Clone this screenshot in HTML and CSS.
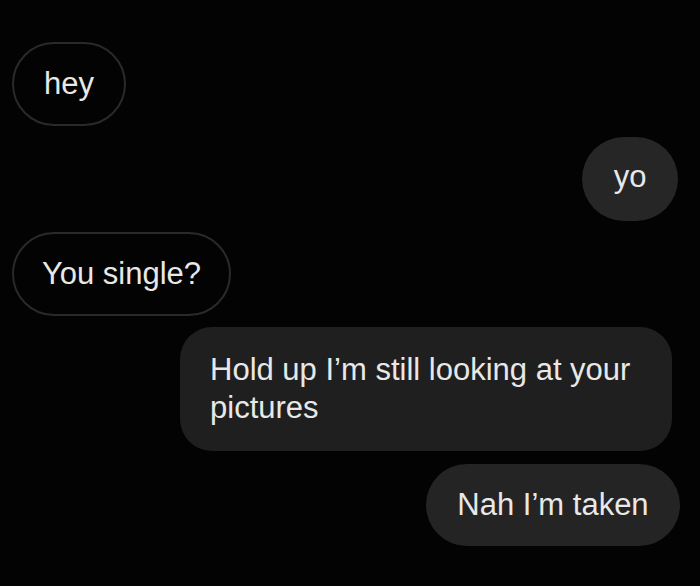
FILE: index.html
```html
<!DOCTYPE html>
<html>
<head>
<meta charset="utf-8">
<link rel="stylesheet" href="styles.css">
</head>
<body>
<div class="chat">
  <div class="bubble in hey">hey</div>
  <div class="bubble out yo">yo</div>
  <div class="bubble in single">You single?</div>
  <div class="bubble out long">Hold up I’m still looking at your pictures</div>
  <div class="bubble out nah">Nah I’m taken</div>
</div>
</body>
</html>
```
FILE: styles.css
```css
html, body {
  margin: 0;
  padding: 0;
  background: #030303;
  width: 700px;
  height: 586px;
  overflow: hidden;
}
.chat {
  display: flex;
  flex-direction: column;
  gap: 11px;
  padding: 42px 20px 0 12px;
  font-family: "Liberation Sans", Arial, sans-serif;
  font-size: 31px;
  line-height: 38px;
  color: #e8e8e8;
}
.bubble {
  box-sizing: border-box;
  border-radius: 42px;
  height: 84px;
  text-align: center;
}
.in {
  align-self: flex-start;
  border: 2px solid #2a2a2a;
  padding: 21px 0;
}
.hey { width: 114px; }
.single { width: 219px; }
.out {
  align-self: flex-end;
  background: #262626;
}
.yo {
  width: 96px;
  padding: 21px 0;
  margin-right: 2px;
}
.long {
  width: 492px;
  height: 124px;
  padding: 24px 28px 24px 30px;
  text-align: left;
  border-radius: 32px;
  background: #1f1f1f;
  margin-right: 8px;
}
.nah {
  height: 82px;
  width: 254px;
  padding: 22px 0;
  margin-top: 2px;
  background: #242424;
}
```
